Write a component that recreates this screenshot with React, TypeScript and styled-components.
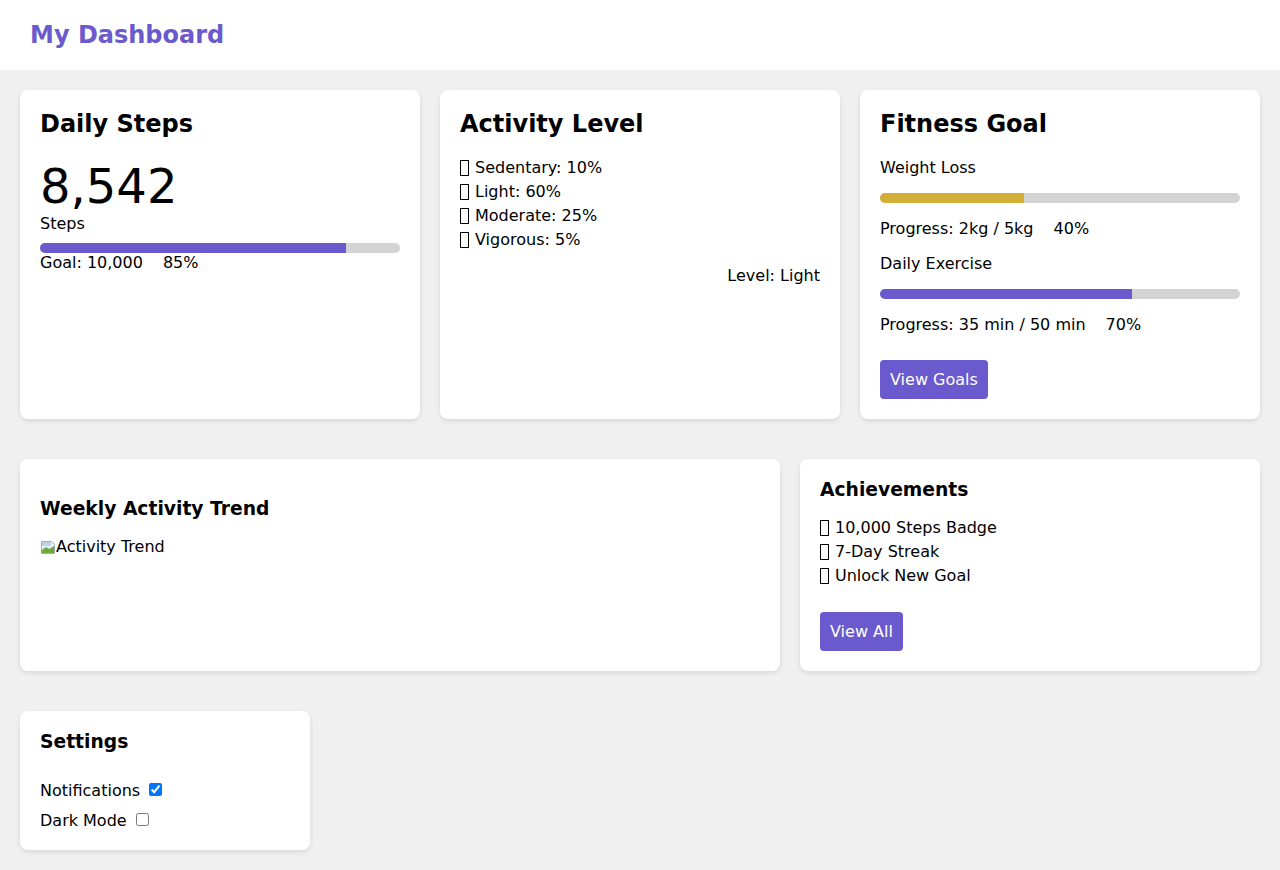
import styled, { createGlobalStyle } from 'styled-components';

const GlobalStyle = createGlobalStyle`
  body {
    margin: 0;
    background: #f0f0f0;
    font-family: "DejaVu Sans", Verdana, sans-serif;
    font-size: 16px;
    color: #000;
  }
`;

const Header = styled.header`
  height: 70px;
  box-sizing: border-box;
  padding: 21px 30px 0;
  background: #fff;
`;

const Brand = styled.h1`
  margin: 0;
  font-size: 24px;
  font-weight: bold;
  color: #6a5acd;
`;

const Main = styled.main`
  display: flex;
  flex-direction: column;
  gap: 40px;
  padding: 20px;
`;

const Row = styled.section<{ $cols: string }>`
  display: grid;
  grid-template-columns: ${(p) => p.$cols};
  gap: 20px;
  align-items: stretch;
`;

const Card = styled.div`
  background: #fff;
  border-radius: 8px;
  padding: 20px;
  box-shadow: 0 2px 5px rgba(0, 0, 0, 0.1);
`;

const CardTitle = styled.h2`
  margin: 0 0 20px;
  font-size: 24px;
  font-weight: bold;
`;

const SectionTitle = styled.h3<{ $spaced?: boolean }>`
  margin: ${(p) => (p.$spaced ? '18.72px 0' : '0 0 16px')};
  font-size: 18.72px;
  font-weight: bold;
`;

const BigNumber = styled.div`
  font-size: 48px;
  line-height: 56px;
`;

const Track = styled.div<{ $top?: number }>`
  height: 10px;
  border-radius: 5px;
  background: #d3d3d3;
  overflow: hidden;
  margin-top: ${(p) => p.$top ?? 0}px;
`;

const Fill = styled.div<{ $color: string }>`
  height: 100%;
  background: ${(p) => p.$color};
`;

const StatLine = styled.div`
  display: flex;
  gap: 20px;
`;

const List = styled.ul<{ $top?: number }>`
  list-style: none;
  margin: ${(p) => p.$top ?? 0}px 0 0;
  padding: 0;
  line-height: 24px;
`;

/* emoji shown as missing-glyph boxes, as in the reference */
const Tofu = styled.span`
  display: inline-block;
  width: 7px;
  height: 14px;
  border: 1px solid #000;
  margin-right: 6px;
  vertical-align: -3px;
`;

const RightText = styled.div`
  margin-top: 14px;
  text-align: right;
`;

const GoalBlock = styled.div`
  display: flex;
  flex-direction: column;
  gap: 16px;
  margin-bottom: 16px;
`;

const Button = styled.button<{ $top: number }>`
  margin-top: ${(p) => p.$top}px;
  padding: 10px;
  border: none;
  border-radius: 4px;
  background: #6a5acd;
  color: #fff;
  font-family: inherit;
  font-size: 16px;
  cursor: pointer;
`;

const BrokenImage = styled.span`
  display: inline-flex;
  align-items: center;
  line-height: 19px;
`;

const SettingsList = styled.div`
  display: flex;
  flex-direction: column;
  gap: 11px;
  margin-top: 29px;
`;

const Setting = styled.label`
  display: block;
  line-height: 19px;
  input {
    margin: 0 0 0 4px;
    width: 13px;
    height: 13px;
    vertical-align: 0;
  }
`;

const Progress = ({ pct, color, top }: { pct: number; color: string; top?: number }) => (
  <Track $top={top}>
    <Fill $color={color} style={{ width: `${pct}%` }} />
  </Track>
);

const Item = ({ children }: { children: string }) => (
  <li>
    <Tofu />
    {children}
  </li>
);

const BrokenIcon = () => (
  <svg width="16" height="16" viewBox="0 0 16 16">
    <path d="M1.5 2.5h10l3 3v9h-13z" fill="#eef3f8" stroke="#a0acb8" />
    <path d="M2 3h9v4H2z" fill="#b9d3ee" />
    <path d="M2 11l4-3 3 2 5-3v7H2z" fill="#6aaa3a" />
  </svg>
);

export default function App() {
  return (
    <>
      <GlobalStyle />
      <Header>
        <Brand>My Dashboard</Brand>
      </Header>
      <Main>
        <Row $cols="repeat(3, 1fr)">
          <Card>
            <CardTitle>Daily Steps</CardTitle>
            <BigNumber>8,542</BigNumber>
            <div>Steps</div>
            <Progress pct={85} color="#6a5acd" top={10} />
            <StatLine>
              <span>Goal: 10,000</span>
              <span>85%</span>
            </StatLine>
          </Card>
          <Card>
            <CardTitle>Activity Level</CardTitle>
            <List $top={-2}>
              <Item>Sedentary: 10%</Item>
              <Item>Light: 60%</Item>
              <Item>Moderate: 25%</Item>
              <Item>Vigorous: 5%</Item>
            </List>
            <RightText>Level: Light</RightText>
          </Card>
          <Card>
            <CardTitle>Fitness Goal</CardTitle>
            <GoalBlock>
              <div>Weight Loss</div>
              <Progress pct={40} color="#d4af37" />
              <StatLine>
                <span>Progress: 2kg / 5kg</span>
                <span>40%</span>
              </StatLine>
            </GoalBlock>
            <GoalBlock>
              <div>Daily Exercise</div>
              <Progress pct={70} color="#6a5acd" />
              <StatLine>
                <span>Progress: 35 min / 50 min</span>
                <span>70%</span>
              </StatLine>
            </GoalBlock>
            <Button $top={10}>View Goals</Button>
          </Card>
        </Row>
        <Row $cols="760px 460px">
          <Card>
            <SectionTitle $spaced>Weekly Activity Trend</SectionTitle>
            <BrokenImage>
              <BrokenIcon />
              <span>Activity Trend</span>
            </BrokenImage>
          </Card>
          <Card>
            <SectionTitle>Achievements</SectionTitle>
            <List $top={1}>
              <Item>10,000 Steps Badge</Item>
              <Item>7-Day Streak</Item>
              <Item>Unlock New Goal</Item>
            </List>
            <Button $top={24}>View All</Button>
          </Card>
        </Row>
        <Row $cols="290px">
          <Card>
            <SectionTitle style={{ margin: 0 }}>Settings</SectionTitle>
            <SettingsList>
              <Setting>
                Notifications <input type="checkbox" defaultChecked />
              </Setting>
              <Setting>
                Dark Mode <input type="checkbox" />
              </Setting>
            </SettingsList>
          </Card>
        </Row>
      </Main>
    </>
  );
}
